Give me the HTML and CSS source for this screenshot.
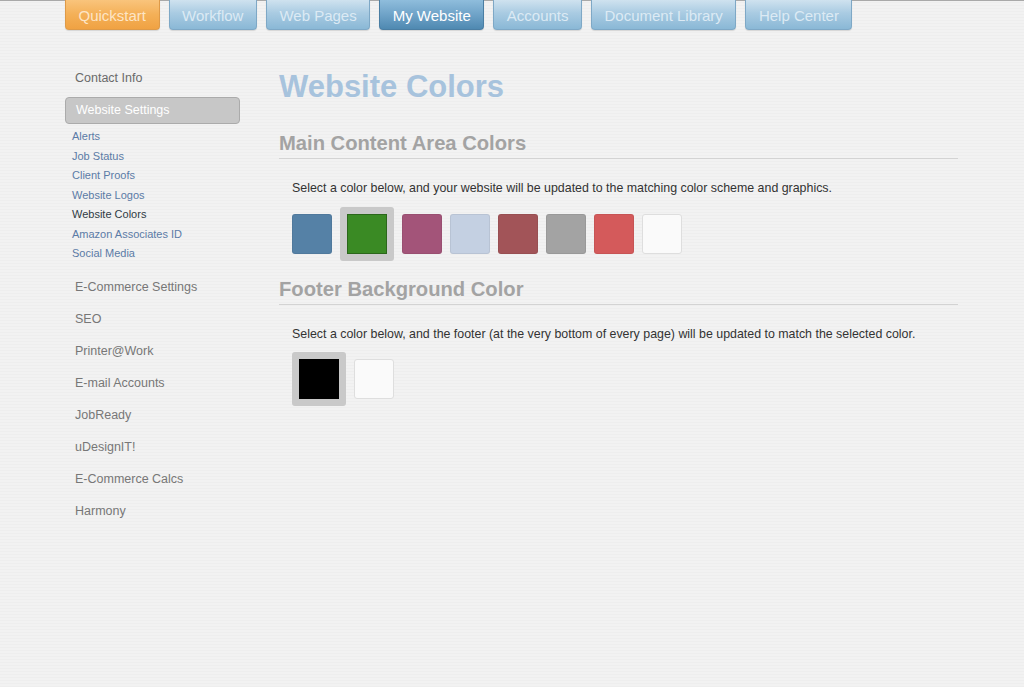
FILE: index.html
```html
<!DOCTYPE html>
<html lang="en">
<head>
<meta charset="utf-8">
<title>Website Colors</title>
<link rel="stylesheet" href="styles.css">
</head>
<body>
<nav class="topnav">
  <a class="tab tab-orange">Quickstart</a>
  <a class="tab">Workflow</a>
  <a class="tab">Web Pages</a>
  <a class="tab tab-active">My Website</a>
  <a class="tab">Accounts</a>
  <a class="tab">Document Library</a>
  <a class="tab">Help Center</a>
</nav>
<div class="page">
  <aside class="sidebar">
    <a class="side-link">Contact Info</a>
    <a class="side-box">Website Settings</a>
    <ul class="sub-list">
      <li><a>Alerts</a></li>
      <li><a>Job Status</a></li>
      <li><a>Client Proofs</a></li>
      <li><a>Website Logos</a></li>
      <li><a class="current">Website Colors</a></li>
      <li><a>Amazon Associates ID</a></li>
      <li><a>Social Media</a></li>
    </ul>
    <ul class="main-list">
      <li><a>E-Commerce Settings</a></li>
      <li><a>SEO</a></li>
      <li><a>Printer@Work</a></li>
      <li><a>E-mail Accounts</a></li>
      <li><a>JobReady</a></li>
      <li><a>uDesignIT!</a></li>
      <li><a>E-Commerce Calcs</a></li>
      <li><a>Harmony</a></li>
    </ul>
  </aside>
  <main class="content">
    <h1 class="title">Website Colors</h1>
    <h2 class="section-title">Main Content Area Colors</h2>
    <p class="desc">Select a color below, and your website will be updated to the matching color scheme and graphics.</p>
    <div class="swatches">
      <span class="swatch c-blue"></span>
      <span class="swatch-sel"><span class="swatch-inner c-green"></span></span>
      <span class="swatch c-purple"></span>
      <span class="swatch c-light"></span>
      <span class="swatch c-brick"></span>
      <span class="swatch c-grey"></span>
      <span class="swatch c-red"></span>
      <span class="swatch c-white"></span>
    </div>
    <h2 class="section-title section-footer">Footer Background Color</h2>
    <p class="desc">Select a color below, and the footer (at the very bottom of every page) will be updated to match the selected color.</p>
    <div class="swatches swatches-footer">
      <span class="swatch-sel"><span class="swatch-inner c-black"></span></span>
      <span class="swatch c-white"></span>
    </div>
  </main>
</div>
</body>
</html>
```
FILE: styles.css
```css
html, body {
  margin: 0;
  padding: 0;
}
body {
  font-family: "Liberation Sans", Arial, Helvetica, sans-serif;
  background-color: #f1f1f1;
  background-image: repeating-linear-gradient(180deg, #f2f2f2 0, #f2f2f2 2px, #eeeeee 2px, #eeeeee 3px);
  min-height: 687px;
  color: #333;
}
a { text-decoration: none; cursor: pointer; }
ul { list-style: none; margin: 0; padding: 0; }

.topnav {
  display: flex;
  gap: 9px;
  padding-left: 65px;
  height: 30px;
  border-top: 1px solid #a9a9a9;
  box-sizing: border-box;
}
.tab {
  display: block;
  height: 30px;
  margin-top: -1px;
  box-sizing: border-box;
  padding: 1px 12.5px 0;
  line-height: 29px;
  font-size: 15px;
  color: #dceaf4;
  background: linear-gradient(180deg, #cfe2ef 0%, #a9cbe2 45%, #8ab8d6 100%);
  border: 1px solid #7ea8c6;
  border-top: none;
  border-radius: 0 0 4px 4px;
  box-shadow: 0 1px 1px rgba(0,0,0,0.12);
  white-space: nowrap;
}
.tab-orange {
  color: #fde5c6;
  background: linear-gradient(180deg, #f9c47c 0%, #f4b057 50%, #f0a243 100%);
  border-color: #de9a48;
}
.tab-active {
  color: #ffffff;
  background: linear-gradient(180deg, #8fbddc 0%, #6fa3c8 50%, #4f89b1 100%);
  border-color: #4a7ea3;
}

.page {
  display: flex;
  padding-left: 65px;
}
.sidebar {
  width: 175px;
  flex: none;
  padding-top: 38px;
}
.side-link {
  display: block;
  padding-left: 10px;
  font-size: 12.5px;
  line-height: 20px;
  color: #6a6a6a;
}
.side-box {
  display: block;
  margin-top: 9px;
  height: 27px;
  box-sizing: border-box;
  padding-left: 10px;
  line-height: 25px;
  font-size: 12.5px;
  color: #ffffff;
  background: #c7c7c7;
  border: 1px solid #ababab;
  border-radius: 4px;
}
.sub-list {
  padding-top: 3px;
  padding-left: 7px;
}
.sub-list li {
  line-height: 19.5px;
  font-size: 11px;
}
.sub-list a { color: #5b7ba6; }
.sub-list a.current { color: #2f3a44; }
.main-list {
  margin-top: 7px;
  padding-left: 10px;
}
.main-list li {
  line-height: 32px;
  font-size: 12.5px;
}
.main-list a { color: #777777; }

.content {
  margin-left: 39px;
  width: 679px;
  padding-top: 39px;
}
.title {
  margin: 0;
  font-size: 31px;
  line-height: 36px;
  font-weight: bold;
  color: #a7c3dd;
}
.section-title {
  margin: 26px 0 0;
  font-size: 20.2px;
  line-height: 24px;
  font-weight: bold;
  color: #a3a3a3;
  padding-bottom: 3px;
  border-bottom: 1px solid #d3d3d3;
}
.section-footer { margin-top: 16px; }
.desc {
  margin: 21px 0 0;
  padding-left: 13px;
  font-size: 12.4px;
  line-height: 16px;
  color: #333333;
}
.swatches {
  display: flex;
  align-items: center;
  gap: 8px;
  margin-top: 11px;
  padding-left: 13px;
  height: 54px;
}
.swatches-footer { margin-top: 10px; }
.swatch {
  display: block;
  width: 40px;
  height: 40px;
  box-sizing: border-box;
  border-radius: 3px;
  border: 1px solid rgba(0,0,0,0.06);
}
.swatch-sel {
  display: block;
  padding: 7px;
  background: #c9c9c9;
  border-radius: 3px;
}
.swatch-inner {
  display: block;
  width: 40px;
  height: 40px;
  box-sizing: border-box;
  border: 1px solid rgba(0,0,0,0.25);
}
.c-blue { background: #5581a6; }
.c-green { background: #3a8a24; }
.c-purple { background: #a35479; }
.c-light { background: #c4d0e2; }
.c-brick { background: #a25458; }
.c-grey { background: #a3a3a3; }
.c-red { background: #d45a5b; }
.c-white { background: #fafafa; border-color: #dedede; }
.c-black { background: #000000; }
```
